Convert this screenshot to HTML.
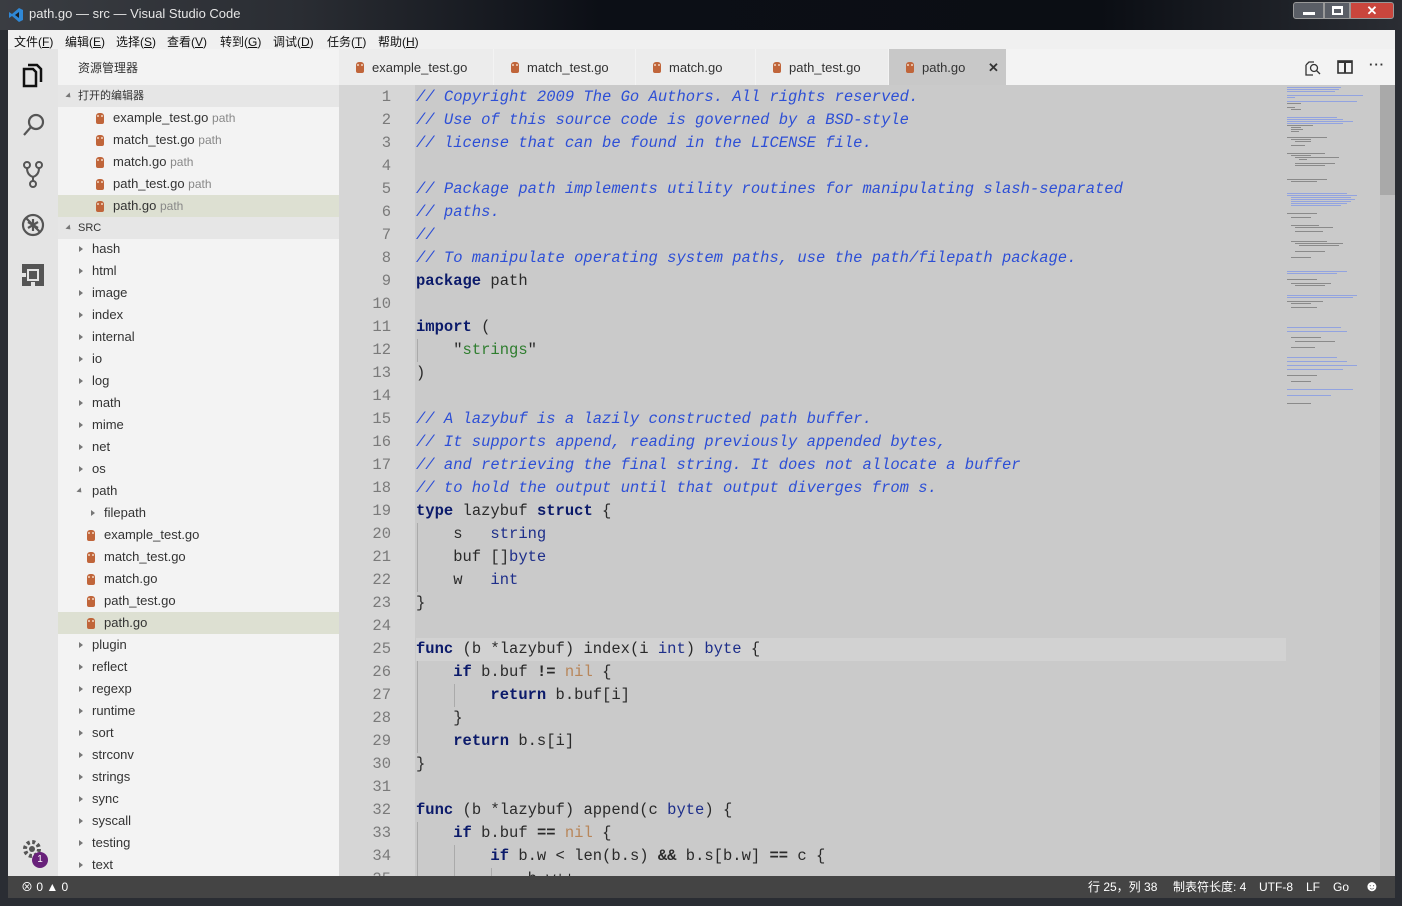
<!DOCTYPE html>
<html><head><meta charset="utf-8"><style>
*{margin:0;padding:0;box-sizing:border-box}
body{width:1402px;height:906px;background:#1a1d22;position:relative;overflow:hidden;font-family:"Liberation Sans","Noto Sans CJK SC",sans-serif;font-size:13px;color:#333}
.abs{position:absolute}
#title{left:0;top:0;width:1402px;height:30px;background:linear-gradient(90deg,#3a3d42 0,#2a2d33 300px,#0c0f16 600px,#0b0e14 1100px,#2a2d33 1402px);color:#e6e6e6;font-size:13px}
#menu{left:8px;top:30px;width:1387px;height:19px;background:#f0f0f0;font-size:12px;color:#111}
#menu span{position:absolute;top:3px}
#act{left:8px;top:49px;width:50px;height:827px;background:#e4e4e4}
#side{left:58px;top:49px;width:281px;height:827px;background:#f3f3f3;font-size:13px}
.row{position:absolute;left:0;width:281px;height:22px;line-height:22px;white-space:nowrap}
.sel{background:#dde0d2}
.arr{position:absolute;top:8px;width:0;height:0;border-left:4px solid #777;border-top:3px solid transparent;border-bottom:3px solid transparent}
.arrd{position:absolute;top:9px;width:0;height:0;border-top:4px solid #777;border-left:3px solid transparent;border-right:3px solid transparent}
.go{position:absolute;top:6px;width:8px;height:11px;background:#c0653a;border-radius:3px 3px 2px 2px}
.go:before{content:"";position:absolute;left:1px;top:2px;width:2px;height:2px;background:#f2d7c2;border-radius:1px;box-shadow:4px 0 0 #f2d7c2}
.dim{color:#888;font-size:12px}
#tabs{left:339px;top:49px;width:1056px;height:36px;background:#f3f3f3}
.tab{position:absolute;top:0;height:36px;line-height:38px;background:#ececec;border-right:1px solid #f3f3f3;color:#333}
#ed{left:339px;top:85px;width:1056px;height:791px;background:#cacaca;overflow:hidden}
#gut{left:0;top:0;width:76px;height:791px;background:#d6d6d6}
#code{position:absolute;left:0;top:1px;width:940px;height:800px}
.ln{position:absolute;left:0;width:52px;text-align:right;color:#7a7a7a;font-family:"Liberation Mono",monospace;font-size:15.5px;height:23px;line-height:23px}
.cl{position:absolute;left:77px;white-space:pre;font-family:"Liberation Mono",monospace;font-size:15.5px;height:23px;line-height:23px;color:#2a2a2a}
.c{color:#2d4fd6;font-style:italic}
.k{color:#0b1a6a;font-weight:bold}
.t{color:#1d2e8a}
.s{color:#2e7d2e}
.n{color:#b8865a}
#status{left:8px;top:876px;width:1387px;height:22px;background:#444;color:#fff;font-size:12px;line-height:22px}
.mm{position:absolute;height:1px;background:#92a3e0}
.mk{position:absolute;height:1px;background:#8a8a8a}
</style></head><body>
<div id="title" class="abs">
 <svg class="abs" style="left:8px;top:7px" width="16" height="16" viewBox="0 0 16 16"><path d="M11 1 L15 3 V13 L11 15 L4 9 L1 11 V5 L4 7 Z" fill="#2f88d6"/><path d="M11 5 V11 L7 8 Z" fill="#1a1d22"/></svg>
 <span class="abs" style="left:29px;top:6px">path.go — src — Visual Studio Code</span>
 <div class="abs" style="left:1293px;top:2px;width:31px;height:17px;background:#5a5e66;border:1px solid #999;border-radius:3px 0 0 3px"><div style="margin:9px 0 0 9px;width:12px;height:3px;background:#fff"></div></div>
 <div class="abs" style="left:1324px;top:2px;width:26px;height:17px;background:#5a5e66;border:1px solid #999"><div style="margin:3px 0 0 7px;width:11px;height:9px;border:2px solid #fff;border-top-width:3px"></div></div>
 <div class="abs" style="left:1350px;top:2px;width:44px;height:17px;background:#c9463d;border:1px solid #999;border-radius:0 3px 3px 0;color:#fff;text-align:center;font-weight:bold;line-height:15px">✕</div>
</div>
<div class="abs" style="left:0;top:30px;width:8px;height:876px;background:#2a2d33"></div>
<div class="abs" style="left:1395px;top:30px;width:7px;height:876px;background:#2a2d33"></div>
<div class="abs" style="left:0;top:898px;width:1402px;height:8px;background:#2a2d33"></div>
<div id="menu" class="abs">
 <span style="left:6px">文件(<u>F</u>)</span><span style="left:57px">编辑(<u>E</u>)</span><span style="left:108px">选择(<u>S</u>)</span><span style="left:159px">查看(<u>V</u>)</span><span style="left:212px">转到(<u>G</u>)</span><span style="left:265px">调试(<u>D</u>)</span><span style="left:319px">任务(<u>T</u>)</span><span style="left:370px">帮助(<u>H</u>)</span>
</div>
<div id="act" class="abs">
 <svg class="abs" style="left:13px;top:13px" width="24" height="26" viewBox="0 0 24 26" fill="none" stroke="#111" stroke-width="2.5"><path d="M7 3 H16 L20 7 V20"/><path d="M3 7 H12 L15 10 V24 H3 Z"/></svg>
 <svg class="abs" style="left:13px;top:63px" width="26" height="26" viewBox="0 0 26 26" fill="none" stroke="#555" stroke-width="2.2"><circle cx="15" cy="10" r="7"/><path d="M10 15 L3 23"/></svg>
 <svg class="abs" style="left:14px;top:112px" width="22" height="28" viewBox="0 0 22 28" fill="none" stroke="#555" stroke-width="2"><circle cx="5" cy="4" r="3"/><circle cx="17" cy="4" r="3"/><circle cx="11" cy="23" r="3"/><path d="M5 7 Q5 14 11 16 Q17 14 17 7 M11 16 V20"/></svg>
 <svg class="abs" style="left:12px;top:163px" width="26" height="26" viewBox="0 0 26 26" fill="none" stroke="#555" stroke-width="2.2"><circle cx="13" cy="13" r="10"/><path d="M6 6 L20 20"/><path d="M13 7 V19 M8 10 L18 16 M8 16 L18 10"/></svg>
 <svg class="abs" style="left:13px;top:214px" width="24" height="24" viewBox="0 0 24 24"><rect x="1" y="1" width="22" height="22" fill="#555"/><rect x="6" y="6" width="12" height="12" fill="#e4e4e4"/><rect x="8" y="8" width="8" height="8" fill="#555"/><rect x="0" y="10" width="5" height="4" fill="#e4e4e4"/><rect x="10" y="19" width="4" height="5" fill="#e4e4e4"/></svg>
 <svg class="abs" style="left:14px;top:790px" width="22" height="22" viewBox="0 0 22 22"><circle cx="10" cy="10" r="7" fill="none" stroke="#555" stroke-width="4" stroke-dasharray="3 2.5"/><circle cx="10" cy="10" r="3" fill="#555"/></svg>
 <div class="abs" style="left:24px;top:803px;width:16px;height:16px;border-radius:8px;background:#68217a;color:#fff;font-size:10px;text-align:center;line-height:16px">1</div>
</div>
<div id="side" class="abs">
 <div class="row" style="top:8px;left:20px;font-size:12px">资源管理器</div>
 <div class="row" style="top:36px;background:#e6e6e6;font-size:11px"><div class="arrd" style="left:8px;border-top-color:#777;transform:rotate(-45deg)"></div><span style="position:absolute;left:20px">打开的编辑器</span></div>
 <div class="row" style="top:58px"><div class="go" style="left:38px"></div><span style="position:absolute;left:55px">example_test.go <span class="dim">path</span></span></div>
 <div class="row" style="top:80px"><div class="go" style="left:38px"></div><span style="position:absolute;left:55px">match_test.go <span class="dim">path</span></span></div>
 <div class="row" style="top:102px"><div class="go" style="left:38px"></div><span style="position:absolute;left:55px">match.go <span class="dim">path</span></span></div>
 <div class="row" style="top:124px"><div class="go" style="left:38px"></div><span style="position:absolute;left:55px">path_test.go <span class="dim">path</span></span></div>
 <div class="row sel" style="top:146px"><div class="go" style="left:38px"></div><span style="position:absolute;left:55px">path.go <span class="dim">path</span></span></div>
 <div class="row" style="top:168px;background:#e6e6e6;font-size:11px"><div class="arrd" style="left:8px;transform:rotate(-45deg)"></div><span style="position:absolute;left:20px">SRC</span></div>
 <div class="row" style="top:189px"><div class="arr" style="left:21px"></div><span style="position:absolute;left:34px">hash</span></div>
 <div class="row" style="top:211px"><div class="arr" style="left:21px"></div><span style="position:absolute;left:34px">html</span></div>
 <div class="row" style="top:233px"><div class="arr" style="left:21px"></div><span style="position:absolute;left:34px">image</span></div>
 <div class="row" style="top:255px"><div class="arr" style="left:21px"></div><span style="position:absolute;left:34px">index</span></div>
 <div class="row" style="top:277px"><div class="arr" style="left:21px"></div><span style="position:absolute;left:34px">internal</span></div>
 <div class="row" style="top:299px"><div class="arr" style="left:21px"></div><span style="position:absolute;left:34px">io</span></div>
 <div class="row" style="top:321px"><div class="arr" style="left:21px"></div><span style="position:absolute;left:34px">log</span></div>
 <div class="row" style="top:343px"><div class="arr" style="left:21px"></div><span style="position:absolute;left:34px">math</span></div>
 <div class="row" style="top:365px"><div class="arr" style="left:21px"></div><span style="position:absolute;left:34px">mime</span></div>
 <div class="row" style="top:387px"><div class="arr" style="left:21px"></div><span style="position:absolute;left:34px">net</span></div>
 <div class="row" style="top:409px"><div class="arr" style="left:21px"></div><span style="position:absolute;left:34px">os</span></div>
 <div class="row" style="top:431px"><div class="arrd" style="left:19px;transform:rotate(-45deg)"></div><span style="position:absolute;left:34px">path</span></div>
 <div class="row" style="top:453px"><div class="arr" style="left:33px"></div><span style="position:absolute;left:46px">filepath</span></div>
 <div class="row" style="top:475px"><div class="go" style="left:29px"></div><span style="position:absolute;left:46px">example_test.go</span></div>
 <div class="row" style="top:497px"><div class="go" style="left:29px"></div><span style="position:absolute;left:46px">match_test.go</span></div>
 <div class="row" style="top:519px"><div class="go" style="left:29px"></div><span style="position:absolute;left:46px">match.go</span></div>
 <div class="row" style="top:541px"><div class="go" style="left:29px"></div><span style="position:absolute;left:46px">path_test.go</span></div>
 <div class="row sel" style="top:563px"><div class="go" style="left:29px"></div><span style="position:absolute;left:46px">path.go</span></div>
 <div class="row" style="top:585px"><div class="arr" style="left:21px"></div><span style="position:absolute;left:34px">plugin</span></div>
 <div class="row" style="top:607px"><div class="arr" style="left:21px"></div><span style="position:absolute;left:34px">reflect</span></div>
 <div class="row" style="top:629px"><div class="arr" style="left:21px"></div><span style="position:absolute;left:34px">regexp</span></div>
 <div class="row" style="top:651px"><div class="arr" style="left:21px"></div><span style="position:absolute;left:34px">runtime</span></div>
 <div class="row" style="top:673px"><div class="arr" style="left:21px"></div><span style="position:absolute;left:34px">sort</span></div>
 <div class="row" style="top:695px"><div class="arr" style="left:21px"></div><span style="position:absolute;left:34px">strconv</span></div>
 <div class="row" style="top:717px"><div class="arr" style="left:21px"></div><span style="position:absolute;left:34px">strings</span></div>
 <div class="row" style="top:739px"><div class="arr" style="left:21px"></div><span style="position:absolute;left:34px">sync</span></div>
 <div class="row" style="top:761px"><div class="arr" style="left:21px"></div><span style="position:absolute;left:34px">syscall</span></div>
 <div class="row" style="top:783px"><div class="arr" style="left:21px"></div><span style="position:absolute;left:34px">testing</span></div>
 <div class="row" style="top:805px"><div class="arr" style="left:21px"></div><span style="position:absolute;left:34px">text</span></div>
</div>
<div id="tabs" class="abs">
 <div class="tab" style="left:0;width:155px"><div class="go" style="left:17px;top:13px"></div><span style="position:absolute;left:33px">example_test.go</span></div>
 <div class="tab" style="left:155px;width:142px"><div class="go" style="left:17px;top:13px"></div><span style="position:absolute;left:33px">match_test.go</span></div>
 <div class="tab" style="left:297px;width:120px"><div class="go" style="left:17px;top:13px"></div><span style="position:absolute;left:33px">match.go</span></div>
 <div class="tab" style="left:417px;width:133px"><div class="go" style="left:17px;top:13px"></div><span style="position:absolute;left:33px">path_test.go</span></div>
 <div class="tab" style="left:550px;width:118px;background:#c8c8c8"><div class="go" style="left:17px;top:13px"></div><span style="position:absolute;left:33px">path.go</span><span style="position:absolute;left:99px;font-weight:bold">✕</span></div>
 <svg class="abs" style="left:966px;top:11px" width="16" height="16" viewBox="0 0 16 16" fill="none" stroke="#333" stroke-width="1.3"><path d="M1 5 V15 H8 M1 5 L4 2 H9"/><circle cx="9" cy="8" r="3.5"/><path d="M11.5 10.5 L15 14"/></svg>
 <svg class="abs" style="left:998px;top:11px" width="16" height="14" viewBox="0 0 16 14" fill="none" stroke="#333" stroke-width="1.6"><rect x="1" y="1" width="14" height="12"/><path d="M8 1 V13 M1 2 H15" stroke-width="2"/></svg>
 <span class="abs" style="left:1030px;top:8px;font-weight:bold;letter-spacing:1px">···</span>
</div>
<div id="ed" class="abs">
 <div id="gut" class="abs"></div>
 <div class="abs" style="left:77px;top:553px;width:870px;height:23px;background:#d2d2d2"></div>
 <div id="code">
 <div class="abs" style="left:78px;top:253px;width:1px;height:23px;background:#aaa"></div>
 <div class="abs" style="left:78px;top:437px;width:1px;height:69px;background:#aaa"></div>
 <div class="abs" style="left:78px;top:575px;width:1px;height:92px;background:#aaa"></div>
 <div class="abs" style="left:78px;top:736px;width:1px;height:60px;background:#aaa"></div>
 <div class="abs" style="left:115px;top:598px;width:1px;height:23px;background:#aaa"></div>
 <div class="abs" style="left:115px;top:759px;width:1px;height:40px;background:#aaa"></div>
 <div class="abs" style="left:152px;top:782px;width:1px;height:20px;background:#aaa"></div>
 <div class="ln" style="top:0">1</div><div class="ln" style="top:23px">2</div><div class="ln" style="top:46px">3</div><div class="ln" style="top:69px">4</div><div class="ln" style="top:92px">5</div><div class="ln" style="top:115px">6</div><div class="ln" style="top:138px">7</div><div class="ln" style="top:161px">8</div><div class="ln" style="top:184px">9</div><div class="ln" style="top:207px">10</div><div class="ln" style="top:230px">11</div><div class="ln" style="top:253px">12</div><div class="ln" style="top:276px">13</div><div class="ln" style="top:299px">14</div><div class="ln" style="top:322px">15</div><div class="ln" style="top:345px">16</div><div class="ln" style="top:368px">17</div><div class="ln" style="top:391px">18</div><div class="ln" style="top:414px">19</div><div class="ln" style="top:437px">20</div><div class="ln" style="top:460px">21</div><div class="ln" style="top:483px">22</div><div class="ln" style="top:506px">23</div><div class="ln" style="top:529px">24</div><div class="ln" style="top:552px">25</div><div class="ln" style="top:575px">26</div><div class="ln" style="top:598px">27</div><div class="ln" style="top:621px">28</div><div class="ln" style="top:644px">29</div><div class="ln" style="top:667px">30</div><div class="ln" style="top:690px">31</div><div class="ln" style="top:713px">32</div><div class="ln" style="top:736px">33</div><div class="ln" style="top:759px">34</div><div class="ln" style="top:782px">35</div>
 <div class="cl c" style="top:0">// Copyright 2009 The Go Authors. All rights reserved.</div>
 <div class="cl c" style="top:23px">// Use of this source code is governed by a BSD-style</div>
 <div class="cl c" style="top:46px">// license that can be found in the LICENSE file.</div>
 <div class="cl c" style="top:92px">// Package path implements utility routines for manipulating slash-separated</div>
 <div class="cl c" style="top:115px">// paths.</div>
 <div class="cl c" style="top:138px">//</div>
 <div class="cl c" style="top:161px">// To manipulate operating system paths, use the path/filepath package.</div>
 <div class="cl" style="top:184px"><span class="k">package</span> path</div>
 <div class="cl" style="top:230px"><span class="k">import</span> (</div>
 <div class="cl" style="top:253px">    "<span class="s">strings</span>"</div>
 <div class="cl" style="top:276px">)</div>
 <div class="cl c" style="top:322px">// A lazybuf is a lazily constructed path buffer.</div>
 <div class="cl c" style="top:345px">// It supports append, reading previously appended bytes,</div>
 <div class="cl c" style="top:368px">// and retrieving the final string. It does not allocate a buffer</div>
 <div class="cl c" style="top:391px">// to hold the output until that output diverges from s.</div>
 <div class="cl" style="top:414px"><span class="k">type</span> lazybuf <span class="k">struct</span> {</div>
 <div class="cl" style="top:437px">    s   <span class="t">string</span></div>
 <div class="cl" style="top:460px">    buf []<span class="t">byte</span></div>
 <div class="cl" style="top:483px">    w   <span class="t">int</span></div>
 <div class="cl" style="top:506px">}</div>
 <div class="cl" style="top:552px"><span class="k">func</span> (b *lazybuf) index(i <span class="t">int</span>) <span class="t">byte</span> {</div>
 <div class="cl" style="top:575px">    <span class="k">if</span> b.buf <b>!=</b> <span class="n">nil</span> {</div>
 <div class="cl" style="top:598px">        <span class="k">return</span> b.buf[i]</div>
 <div class="cl" style="top:621px">    }</div>
 <div class="cl" style="top:644px">    <span class="k">return</span> b.s[i]</div>
 <div class="cl" style="top:667px">}</div>
 <div class="cl" style="top:713px"><span class="k">func</span> (b *lazybuf) append(c <span class="t">byte</span>) {</div>
 <div class="cl" style="top:736px">    <span class="k">if</span> b.buf <b>==</b> <span class="n">nil</span> {</div>
 <div class="cl" style="top:759px">        <span class="k">if</span> b.w &lt; len(b.s) <b>&amp;&amp;</b> b.s[b.w] <b>==</b> c {</div>
 <div class="cl" style="top:782px">            b.w++</div>
 </div>
 <div class="abs" style="left:947px;top:0;width:95px;height:791px">
  <div class="mm" style="left:1px;top:2px;width:54px"></div><div class="mm" style="left:1px;top:4px;width:52px"></div><div class="mm" style="left:1px;top:6px;width:48px"></div><div class="mm" style="left:1px;top:10px;width:76px"></div><div class="mm" style="left:1px;top:12px;width:8px"></div><div class="mm" style="left:1px;top:16px;width:70px"></div><div class="mk" style="left:1px;top:18px;width:14px"></div><div class="mk" style="left:1px;top:22px;width:8px"></div><div class="mk" style="left:5px;top:24px;width:10px"></div>
  <div class="mm" style="left:1px;top:32px;width:50px"></div><div class="mm" style="left:1px;top:34px;width:56px"></div><div class="mm" style="left:1px;top:36px;width:66px"></div><div class="mm" style="left:1px;top:38px;width:56px"></div>
  <div class="mk" style="left:1px;top:40px;width:26px"></div><div class="mk" style="left:5px;top:42px;width:10px"></div><div class="mk" style="left:5px;top:44px;width:12px"></div><div class="mk" style="left:5px;top:46px;width:8px"></div>
  <div class="mk" style="left:1px;top:52px;width:40px"></div><div class="mk" style="left:5px;top:54px;width:20px"></div><div class="mk" style="left:9px;top:56px;width:16px"></div><div class="mk" style="left:5px;top:60px;width:14px"></div>
  <div class="mk" style="left:1px;top:68px;width:38px"></div><div class="mk" style="left:5px;top:70px;width:20px"></div><div class="mk" style="left:9px;top:72px;width:44px"></div><div class="mk" style="left:13px;top:74px;width:8px"></div><div class="mk" style="left:9px;top:78px;width:40px"></div><div class="mk" style="left:9px;top:80px;width:30px"></div>
  <div class="mk" style="left:1px;top:94px;width:40px"></div><div class="mk" style="left:5px;top:96px;width:26px"></div>
  <div class="mm" style="left:1px;top:108px;width:60px"></div><div class="mm" style="left:1px;top:110px;width:70px"></div><div class="mm" style="left:5px;top:112px;width:60px"></div><div class="mm" style="left:5px;top:114px;width:64px"></div><div class="mm" style="left:5px;top:116px;width:60px"></div><div class="mm" style="left:5px;top:118px;width:56px"></div><div class="mm" style="left:5px;top:120px;width:50px"></div>
  <div class="mk" style="left:1px;top:128px;width:30px"></div><div class="mk" style="left:5px;top:132px;width:20px"></div><div class="mk" style="left:5px;top:140px;width:28px"></div><div class="mk" style="left:9px;top:142px;width:38px"></div><div class="mk" style="left:9px;top:146px;width:28px"></div>
  <div class="mk" style="left:5px;top:156px;width:36px"></div><div class="mk" style="left:9px;top:158px;width:48px"></div><div class="mk" style="left:13px;top:160px;width:40px"></div><div class="mk" style="left:9px;top:166px;width:30px"></div><div class="mk" style="left:5px;top:172px;width:20px"></div>
  <div class="mm" style="left:1px;top:186px;width:60px"></div><div class="mm" style="left:1px;top:188px;width:50px"></div><div class="mk" style="left:1px;top:194px;width:30px"></div><div class="mk" style="left:5px;top:198px;width:40px"></div><div class="mk" style="left:9px;top:200px;width:30px"></div>
  <div class="mm" style="left:1px;top:210px;width:70px"></div><div class="mm" style="left:1px;top:212px;width:66px"></div><div class="mk" style="left:1px;top:216px;width:36px"></div><div class="mk" style="left:5px;top:218px;width:20px"></div><div class="mk" style="left:5px;top:222px;width:26px"></div>
  <div class="mm" style="left:1px;top:242px;width:54px"></div><div class="mm" style="left:1px;top:246px;width:60px"></div><div class="mk" style="left:5px;top:252px;width:30px"></div><div class="mk" style="left:9px;top:256px;width:40px"></div><div class="mk" style="left:5px;top:262px;width:24px"></div>
  <div class="mm" style="left:1px;top:272px;width:50px"></div><div class="mm" style="left:1px;top:276px;width:60px"></div><div class="mm" style="left:1px;top:280px;width:70px"></div><div class="mm" style="left:1px;top:284px;width:56px"></div><div class="mk" style="left:1px;top:290px;width:30px"></div><div class="mk" style="left:5px;top:296px;width:20px"></div><div class="mm" style="left:1px;top:304px;width:66px"></div><div class="mm" style="left:1px;top:310px;width:44px"></div><div class="mk" style="left:1px;top:318px;width:24px"></div>
 </div>
 <div class="abs" style="left:1041px;top:0;width:15px;height:791px;background:#c2c2c2"></div>
 <div class="abs" style="left:1041px;top:0;width:15px;height:110px;background:#a9a9a9"></div>
</div>
<div id="status" class="abs">
 <span class="abs" style="left:13px">⊗ 0 ▲ 0</span>
 <span class="abs" style="left:1080px">行 25，列 38</span>
 <span class="abs" style="left:1165px">制表符长度: 4</span>
 <span class="abs" style="left:1251px">UTF-8</span>
 <span class="abs" style="left:1298px">LF</span>
 <span class="abs" style="left:1325px">Go</span>
 <span class="abs" style="left:1356px;font-size:15px">☻</span>
</div>
</body></html>
